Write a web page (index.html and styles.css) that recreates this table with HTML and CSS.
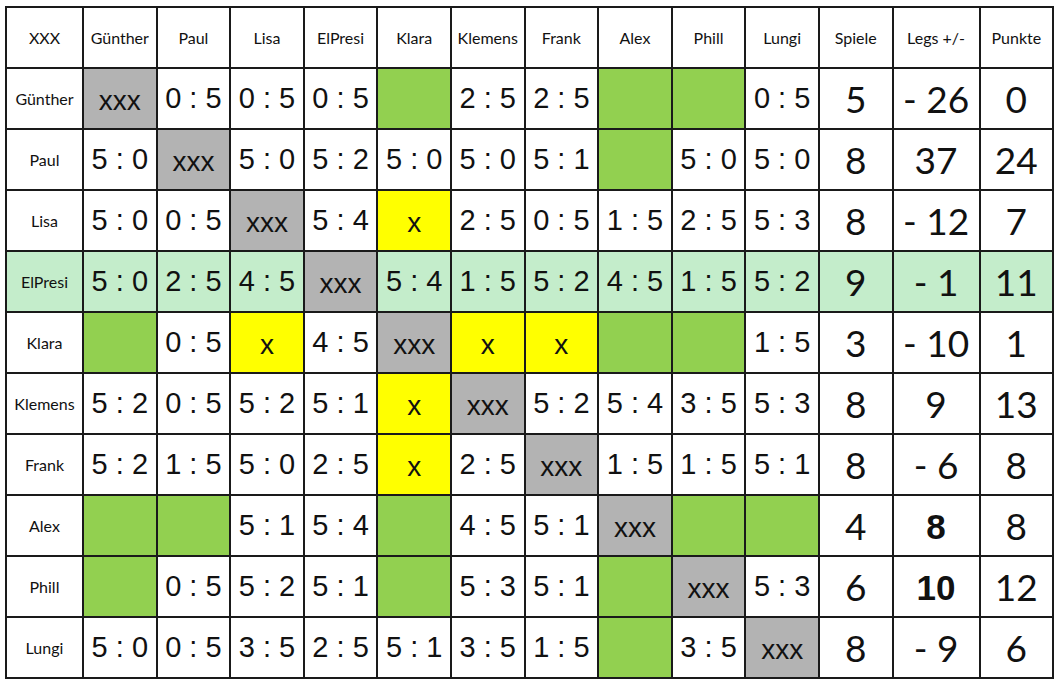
FILE: index.html
```html
<!DOCTYPE html>
<html lang="de">
<head>
<meta charset="utf-8">
<title>Tabelle</title>
<link rel="stylesheet" href="styles.css">
</head>
<body>
<table class="grid">
  <colgroup>
    <col class="c-name"><col class="c-p"><col class="c-p"><col class="c-p"><col class="c-p"><col class="c-p"><col class="c-p"><col class="c-p"><col class="c-p"><col class="c-p"><col class="c-p"><col class="c-p"><col class="c-legs"><col class="c-p">
  </colgroup>
  <thead>
    <tr class="head">
      <th>XXX</th><th>Günther</th><th>Paul</th><th>Lisa</th><th>ElPresi</th><th>Klara</th><th>Klemens</th><th>Frank</th><th>Alex</th><th>Phill</th><th>Lungi</th><th>Spiele</th><th>Legs +/-</th><th>Punkte</th>
    </tr>
  </thead>
  <tbody>
    <tr>
      <th>Günther</th><td class="self">xxx</td><td>0 : 5</td><td>0 : 5</td><td>0 : 5</td><td class="open"></td><td>2 : 5</td><td>2 : 5</td><td class="open"></td><td class="open"></td><td>0 : 5</td><td class="big">5</td><td class="big">- 26</td><td class="big">0</td>
    </tr>
    <tr>
      <th>Paul</th><td>5 : 0</td><td class="self">xxx</td><td>5 : 0</td><td>5 : 2</td><td>5 : 0</td><td>5 : 0</td><td>5 : 1</td><td class="open"></td><td>5 : 0</td><td>5 : 0</td><td class="big">8</td><td class="big">37</td><td class="big">24</td>
    </tr>
    <tr>
      <th>Lisa</th><td>5 : 0</td><td>0 : 5</td><td class="self">xxx</td><td>5 : 4</td><td class="forfeit">x</td><td>2 : 5</td><td>0 : 5</td><td>1 : 5</td><td>2 : 5</td><td>5 : 3</td><td class="big">8</td><td class="big">- 12</td><td class="big">7</td>
    </tr>
    <tr class="mark">
      <th>ElPresi</th><td>5 : 0</td><td>2 : 5</td><td>4 : 5</td><td class="self">xxx</td><td>5 : 4</td><td>1 : 5</td><td>5 : 2</td><td>4 : 5</td><td>1 : 5</td><td>5 : 2</td><td class="big">9</td><td class="big">- 1</td><td class="big">11</td>
    </tr>
    <tr>
      <th>Klara</th><td class="open"></td><td>0 : 5</td><td class="forfeit">x</td><td>4 : 5</td><td class="self">xxx</td><td class="forfeit">x</td><td class="forfeit">x</td><td class="open"></td><td class="open"></td><td>1 : 5</td><td class="big">3</td><td class="big">- 10</td><td class="big">1</td>
    </tr>
    <tr>
      <th>Klemens</th><td>5 : 2</td><td>0 : 5</td><td>5 : 2</td><td>5 : 1</td><td class="forfeit">x</td><td class="self">xxx</td><td>5 : 2</td><td>5 : 4</td><td>3 : 5</td><td>5 : 3</td><td class="big">8</td><td class="big">9</td><td class="big">13</td>
    </tr>
    <tr>
      <th>Frank</th><td>5 : 2</td><td>1 : 5</td><td>5 : 0</td><td>2 : 5</td><td class="forfeit">x</td><td>2 : 5</td><td class="self">xxx</td><td>1 : 5</td><td>1 : 5</td><td>5 : 1</td><td class="big">8</td><td class="big">- 6</td><td class="big">8</td>
    </tr>
    <tr>
      <th>Alex</th><td class="open"></td><td class="open"></td><td>5 : 1</td><td>5 : 4</td><td class="open"></td><td>4 : 5</td><td>5 : 1</td><td class="self">xxx</td><td class="open"></td><td class="open"></td><td class="big">4</td><td class="strong">8</td><td class="big">8</td>
    </tr>
    <tr>
      <th>Phill</th><td class="open"></td><td>0 : 5</td><td>5 : 2</td><td>5 : 1</td><td class="open"></td><td>5 : 3</td><td>5 : 1</td><td class="open"></td><td class="self">xxx</td><td>5 : 3</td><td class="big">6</td><td class="strong">10</td><td class="big">12</td>
    </tr>
    <tr>
      <th>Lungi</th><td>5 : 0</td><td>0 : 5</td><td>3 : 5</td><td>2 : 5</td><td>5 : 1</td><td>3 : 5</td><td>1 : 5</td><td class="open"></td><td>3 : 5</td><td class="self">xxx</td><td class="big">8</td><td class="big">- 9</td><td class="big">6</td>
    </tr>
  </tbody>
</table>
</body>
</html>
```

FILE: styles.css
```css
html, body {
  margin: 0;
  padding: 0;
  background: #ffffff;
}

body {
  padding: 6px 0 0 5px;
}

.grid {
  border-collapse: collapse;
  table-layout: fixed;
  width: 1048px;
  color: #111;
}

.c-name { width: 77px; }
.c-p { width: 73.6px; }
.c-legs { width: 87px; }

.grid th,
.grid td {
  border: 2px solid #1a1a1a;
  text-align: center;
  vertical-align: middle;
  padding: 0;
  overflow: hidden;
  white-space: nowrap;
}

.grid th {
  font-family: "Lato", "Open Sans", sans-serif;
  font-weight: 400;
  font-size: 16px;
}

.head th {
  height: 59px;
  font-size: 16px;
}

tbody tr {
  height: 61px;
}

tbody th {
  font-size: 15px;
}

.grid td {
  font-family: "Liberation Sans", Arial, sans-serif;
  font-size: 29px;
  letter-spacing: 0;
}

.grid td.self {
  background: #b3b3b3;
  font-size: 28px;
  padding-top: 4px;
}

.grid td.open {
  background: #92d050;
}

.grid td.forfeit {
  background: #ffff00;
  font-size: 28px;
  padding-top: 4px;
}

.grid td.big {
  font-family: "Lato", "Open Sans", sans-serif;
  font-size: 37px;
  font-weight: 400;
}

.grid td.strong {
  font-family: "Liberation Sans", Arial, sans-serif;
  font-size: 35px;
  font-weight: 700;
  padding-top: 2px;
}

.mark th,
.mark td {
  background: #c4edcb;
}

.mark td.self {
  background: #b3b3b3;
}
```
